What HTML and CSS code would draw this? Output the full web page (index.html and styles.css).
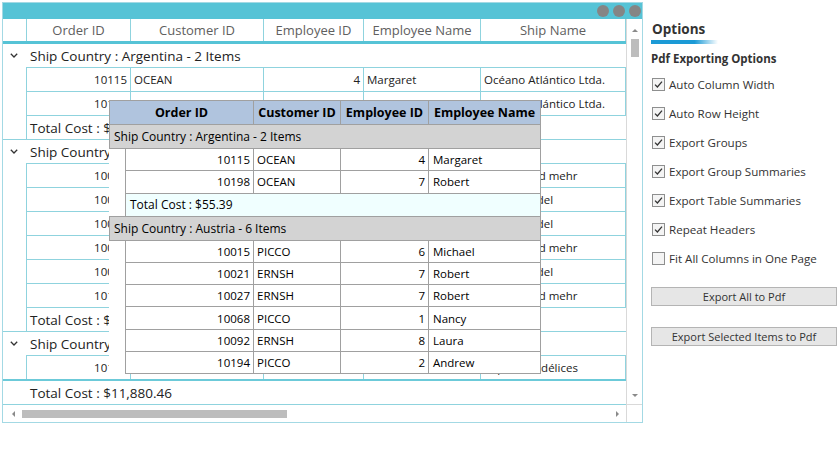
FILE: index.html
```html
<!DOCTYPE html>
<html>
<head>
<meta charset="utf-8">
<link rel="stylesheet" href="styles.css">
</head>
<body>
<div class="page">
  <div class="window">
    <div class="titlebar"><span class="dot"></span><span class="dot"></span><span class="dot"></span></div>
    <div class="middle">
      <div class="viewport">
        <div class="hdr">
          <div class="hc ind"></div>
          <div class="hc w1">Order ID</div>
          <div class="hc w2">Customer ID</div>
          <div class="hc w3">Employee ID</div>
          <div class="hc w4">Employee Name</div>
          <div class="hc w5">Ship Name</div>
        </div>
        <div class="body">
          <div class="group">
            <div class="ghead"><span class="chev"><svg width="8" height="5" viewBox="0 0 8 5"><polyline points="0.8,0.8 4,4 7.2,0.8" fill="none" stroke="#333" stroke-width="1.3"/></svg></span><span>Ship Country : Argentina - 2 Items</span></div>
            <div class="rows">
              <div class="row"><div class="c w1 num">10115</div><div class="c w2">OCEAN</div><div class="c w3 num">4</div><div class="c w4">Margaret</div><div class="c w5">Océano Atlántico Ltda.</div></div>
              <div class="row"><div class="c w1 num">10198</div><div class="c w2">OCEAN</div><div class="c w3 num">7</div><div class="c w4">Robert</div><div class="c w5">Océano Atlántico Ltda.</div></div>
              <div class="total">Total Cost : $55.39</div>
            </div>
          </div>
          <div class="group">
            <div class="ghead"><span class="chev"><svg width="8" height="5" viewBox="0 0 8 5"><polyline points="0.8,0.8 4,4 7.2,0.8" fill="none" stroke="#333" stroke-width="1.3"/></svg></span><span>Ship Country : Austria - 6 Items</span></div>
            <div class="rows">
              <div class="row"><div class="c w1 num">10015</div><div class="c w2">PICCO</div><div class="c w3 num">6</div><div class="c w4">Michael</div><div class="c w5">Piccolo und mehr</div></div>
              <div class="row"><div class="c w1 num">10021</div><div class="c w2">ERNSH</div><div class="c w3 num">7</div><div class="c w4">Robert</div><div class="c w5">Ernst Handel</div></div>
              <div class="row"><div class="c w1 num">10027</div><div class="c w2">ERNSH</div><div class="c w3 num">7</div><div class="c w4">Robert</div><div class="c w5">Ernst Handel</div></div>
              <div class="row"><div class="c w1 num">10068</div><div class="c w2">PICCO</div><div class="c w3 num">1</div><div class="c w4">Nancy</div><div class="c w5">Piccolo und mehr</div></div>
              <div class="row"><div class="c w1 num">10092</div><div class="c w2">ERNSH</div><div class="c w3 num">8</div><div class="c w4">Laura</div><div class="c w5">Ernst Handel</div></div>
              <div class="row"><div class="c w1 num">10194</div><div class="c w2">PICCO</div><div class="c w3 num">2</div><div class="c w4">Andrew</div><div class="c w5">Piccolo und mehr</div></div>
              <div class="total">Total Cost : $1,042.77</div>
            </div>
          </div>
          <div class="group">
            <div class="ghead"><span class="chev"><svg width="8" height="5" viewBox="0 0 8 5"><polyline points="0.8,0.8 4,4 7.2,0.8" fill="none" stroke="#333" stroke-width="1.3"/></svg></span><span>Ship Country : Belgium - 1 Items</span></div>
            <div class="rows">
              <div class="row"><div class="c w1 num">10105</div><div class="c w2">SUPRD</div><div class="c w3 num">3</div><div class="c w4">Janet</div><div class="c w5">Suprêmes délices</div></div>
              <div class="total">Total Cost : $87.12</div>
            </div>
          </div>
        </div>
        <div class="footer">Total Cost : $11,880.46</div>
      </div>
      <div class="vscroll">
        <span class="arr-up"></span>
        <span class="vthumb"></span>
        <span class="vspace"></span>
        <span class="arr-down"></span>
      </div>
    </div>
    <div class="bottom">
      <div class="hscroll">
        <span class="arr-left"></span>
        <span class="hthumb"></span>
        <span class="hspace"></span>
        <span class="arr-right"></span>
      </div>
      <div class="corner"></div>
    </div>

    <div class="drag">
      <div class="dhdr">
        <div class="dh d1">Order ID</div>
        <div class="dh d2">Customer ID</div>
        <div class="dh d3">Employee ID</div>
        <div class="dh d4">Employee Name</div>
      </div>
      <div class="dgroup">Ship Country : Argentina - 2 Items</div>
      <div class="drow"><div class="dc e1 num">10115</div><div class="dc e2">OCEAN</div><div class="dc e3 num">4</div><div class="dc e4">Margaret</div></div>
      <div class="drow"><div class="dc e1 num">10198</div><div class="dc e2">OCEAN</div><div class="dc e3 num">7</div><div class="dc e4">Robert</div></div>
      <div class="dtotal">Total Cost : $55.39</div>
      <div class="dgroup">Ship Country : Austria - 6 Items</div>
      <div class="drow"><div class="dc e1 num">10015</div><div class="dc e2">PICCO</div><div class="dc e3 num">6</div><div class="dc e4">Michael</div></div>
      <div class="drow"><div class="dc e1 num">10021</div><div class="dc e2">ERNSH</div><div class="dc e3 num">7</div><div class="dc e4">Robert</div></div>
      <div class="drow"><div class="dc e1 num">10027</div><div class="dc e2">ERNSH</div><div class="dc e3 num">7</div><div class="dc e4">Robert</div></div>
      <div class="drow"><div class="dc e1 num">10068</div><div class="dc e2">PICCO</div><div class="dc e3 num">1</div><div class="dc e4">Nancy</div></div>
      <div class="drow"><div class="dc e1 num">10092</div><div class="dc e2">ERNSH</div><div class="dc e3 num">8</div><div class="dc e4">Laura</div></div>
      <div class="drow"><div class="dc e1 num">10194</div><div class="dc e2">PICCO</div><div class="dc e3 num">2</div><div class="dc e4">Andrew</div></div>
    </div>
  </div>

  <div class="options">
    <div class="opt-title">Options</div>
    <div class="opt-bar"></div>
    <div class="opt-sub">Pdf Exporting Options</div>
    <div class="chk-list">
      <div class="chk"><span class="box"><svg width="11" height="11" viewBox="0 0 11 11"><polyline points="2,5.6 4.4,8 9,2.6" fill="none" stroke="#333" stroke-width="1.3"/></svg></span>Auto Column Width</div>
      <div class="chk"><span class="box"><svg width="11" height="11" viewBox="0 0 11 11"><polyline points="2,5.6 4.4,8 9,2.6" fill="none" stroke="#333" stroke-width="1.3"/></svg></span>Auto Row Height</div>
      <div class="chk"><span class="box"><svg width="11" height="11" viewBox="0 0 11 11"><polyline points="2,5.6 4.4,8 9,2.6" fill="none" stroke="#333" stroke-width="1.3"/></svg></span>Export Groups</div>
      <div class="chk"><span class="box"><svg width="11" height="11" viewBox="0 0 11 11"><polyline points="2,5.6 4.4,8 9,2.6" fill="none" stroke="#333" stroke-width="1.3"/></svg></span>Export Group Summaries</div>
      <div class="chk"><span class="box"><svg width="11" height="11" viewBox="0 0 11 11"><polyline points="2,5.6 4.4,8 9,2.6" fill="none" stroke="#333" stroke-width="1.3"/></svg></span>Export Table Summaries</div>
      <div class="chk"><span class="box"><svg width="11" height="11" viewBox="0 0 11 11"><polyline points="2,5.6 4.4,8 9,2.6" fill="none" stroke="#333" stroke-width="1.3"/></svg></span>Repeat Headers</div>
      <div class="chk"><span class="box"></span>Fit All Columns in One Page</div>
    </div>
    <div class="btn btn1">Export All to Pdf</div>
    <div class="btn btn2">Export Selected Items to Pdf</div>
  </div>
</div>
</body>
</html>
```
FILE: styles.css
```css
* { box-sizing: border-box; }
html, body { margin: 0; padding: 0; background: #fff; }
body {
  font-family: "Open Sans", "Noto Sans", sans-serif;
  color: #222;
  width: 840px;
  height: 450px;
  overflow: hidden;
}
.page { display: flex; align-items: flex-start; padding: 2px; }

/* grid window */
.window {
  position: relative;
  flex: none;
  width: 641px;
  height: 421px;
  border: 1px solid #a3d9e4;
  display: flex;
  flex-direction: column;
}
.titlebar {
  height: 16px;
  flex: none;
  background: #56c3d6;
  display: flex;
  justify-content: flex-end;
  align-items: center;
  gap: 4px;
  padding-right: 1px;
}
.dot { width: 12px; height: 12px; border-radius: 50%; background: #858585; }

.middle { height: 385px; flex: none; display: flex; }
.viewport { width: 623px; display: flex; flex-direction: column; }

.hdr {
  height: 25px;
  flex: none;
  display: flex;
  border-bottom: 3px solid #56c3d6;
}
.hc {
  border-right: 1px solid #8fd3de;
  display: flex;
  align-items: center;
  justify-content: center;
  font-size: 13px;
  color: #606060;
  white-space: nowrap;
}
.ind { width: 24px; }
.w1 { width: 104px; }
.w2 { width: 133px; }
.w3 { width: 100px; }
.w4 { width: 117px; }
.w5 { width: 145px; }

.body { flex: 1; overflow: hidden; }
.group { border-bottom: 1px solid #8fd3de; }
.ghead {
  height: 23px;
  display: flex;
  align-items: center;
  font-size: 13.5px;
  color: #222;
  white-space: nowrap;
}
.chev { width: 27px; padding-left: 7px; display: flex; align-items: center; }
.rows { margin-left: 23px; border-left: 1px solid #8fd3de; }
.row {
  height: 24px;
  border-top: 1px solid #8fd3de;
  display: flex;
  font-size: 11.5px;
  color: #222;
}
.c {
  border-right: 1px solid #8fd3de;
  display: flex;
  align-items: center;
  padding: 0 3px;
  white-space: nowrap;
  overflow: hidden;
}
.num { justify-content: flex-end; }
.total {
  height: 24px;
  border-top: 1px solid #8fd3de;
  padding-left: 3px;
  display: flex;
  align-items: center;
  font-size: 13.5px;
  color: #222;
}
.footer {
  height: 25px;
  flex: none;
  border-top: 2px solid #6ccad9;
  padding-left: 27px;
  display: flex;
  align-items: center;
  font-size: 13.5px;
  color: #222;
}

/* scrollbars */
.vscroll {
  width: 16px;
  border-left: 1px solid #d9d9d9;
  display: flex;
  flex-direction: column;
  align-items: center;
}
.arr-up {
  margin-top: 10px;
  width: 0; height: 0;
  border-left: 3px solid transparent;
  border-right: 3px solid transparent;
  border-bottom: 3px solid #8a8a8a;
}
.vthumb { margin-top: 7px; width: 8px; height: 18px; background: #bdbdbd; }
.vspace { flex: 1; }
.arr-down {
  margin-bottom: 7px;
  width: 0; height: 0;
  border-left: 3px solid transparent;
  border-right: 3px solid transparent;
  border-top: 3px solid #8a8a8a;
}
.bottom { height: 18px; flex: none; display: flex; }
.hscroll {
  width: 623px;
  border-top: 1px solid #8fd3de;
  display: flex;
  align-items: center;
  padding: 0 7px 0 9px;
}
.arr-left {
  width: 0; height: 0;
  border-top: 3px solid transparent;
  border-bottom: 3px solid transparent;
  border-right: 3px solid #8a8a8a;
}
.hthumb { margin-left: 7px; width: 265px; height: 8px; background: #bdbdbd; }
.hspace { flex: 1; }
.arr-right {
  width: 0; height: 0;
  border-top: 3px solid transparent;
  border-bottom: 3px solid transparent;
  border-left: 3px solid #8a8a8a;
}
.corner { width: 16px; border-top: 1px solid #d9d9d9; border-left: 1px solid #d9d9d9; }

/* drag preview */
.drag {
  position: absolute;
  left: 106px;
  top: 97px;
  width: 432px;
  background: #fff;
  color: #000;
}
.dhdr {
  display: flex;
  height: 24px;
  border: 1px solid #a0a0a0;
  border-bottom: none;
  background: #b0c4de;
  font-weight: 700;
  font-size: 12.5px;
}
.dh {
  display: flex;
  align-items: center;
  justify-content: center;
  border-right: 1px solid #a0a0a0;
  white-space: nowrap;
}
.d1 { width: 144px; }
.d2 { width: 87px; }
.d3 { width: 88px; }
.d4 { flex: 1; border-right: none; }
.dgroup {
  height: 25px;
  border: 1px solid #a0a0a0;
  background: #d3d3d3;
  display: flex;
  align-items: center;
  padding-left: 4px;
  font-size: 12px;
}
.drow {
  margin-left: 16px;
  height: 22.3px;
  border-left: 1px solid #a0a0a0;
  border-right: 1px solid #a0a0a0;
  border-bottom: 1px solid #a0a0a0;
  display: flex;
  font-size: 11.5px;
}
.dc {
  display: flex;
  align-items: center;
  padding: 0 3px;
  border-right: 1px solid #a0a0a0;
  white-space: nowrap;
}
.e1 { width: 128px; }
.e2 { width: 87px; }
.e3 { width: 88px; }
.e4 { flex: 1; border-right: none; padding-left: 4px; }
.dtotal {
  margin-left: 16px;
  height: 22px;
  border-left: 1px solid #a0a0a0;
  border-right: 1px solid #a0a0a0;
  background: #f0ffff;
  padding-left: 4px;
  display: flex;
  align-items: center;
  font-size: 12px;
}

/* options panel */
.options {
  margin-left: 8px;
  width: 186px;
  flex: none;
  display: flex;
  flex-direction: column;
  color: #333;
}
.opt-title {
  margin-top: 17px;
  padding-left: 1px;
  font-weight: 700;
  font-size: 13.5px;
  line-height: 20px;
}
.opt-bar {
  margin-top: 1px;
  width: 67px;
  height: 4px;
  background: linear-gradient(to right, #1b9ad6 0%, #1b9ad6 65%, rgba(27, 154, 214, 0) 100%);
}
.opt-sub {
  margin-top: 6px;
  font-weight: 700;
  font-size: 11.5px;
  line-height: 18px;
}
.chk-list { margin-top: 2px; }
.chk {
  height: 29px;
  display: flex;
  align-items: center;
  gap: 4px;
  padding-left: 1px;
  font-size: 11.6px;
  white-space: nowrap;
}
.box {
  width: 13px;
  height: 13px;
  border: 1px solid #8e8f8f;
  background: #f4f4f4;
  display: flex;
  align-items: center;
  justify-content: center;
}
.btn {
  height: 19px;
  border: 1px solid #b4b4b4;
  background: #e6e6e6;
  font-size: 11px;
  display: flex;
  align-items: center;
  justify-content: center;
  color: #333;
}
.btn1 { margin-top: 14px; }
.btn2 { margin-top: 21px; }
```
